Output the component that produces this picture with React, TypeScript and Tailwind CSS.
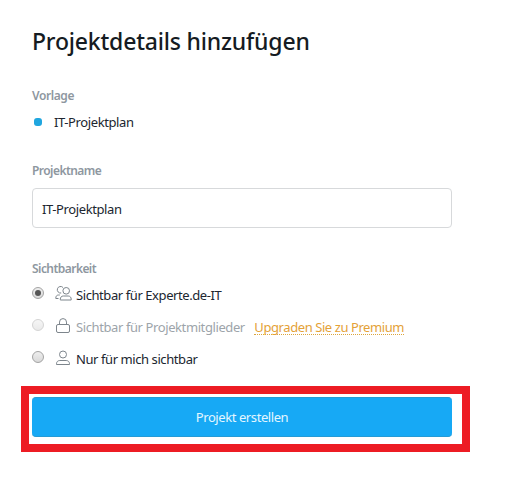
import type { ReactNode } from 'react';

function Label({ children, className }: { children: ReactNode; className: string }) {
  return <div className={`h-4 whitespace-nowrap text-xs font-semibold leading-4 text-[#8e979f] ${className}`}>{children}</div>;
}

function Radio({ checked, disabled }: { checked?: boolean; disabled?: boolean }) {
  return (
    <span
      className={`flex size-3 shrink-0 items-center justify-center rounded-full border bg-linear-to-b ${
        disabled ? 'border-[#d4d4d4] from-[#f6f6f6] to-[#eaeaea]' : 'border-[#a3a3a3] from-[#eeeeee] to-[#d9d9d9]'
      }`}
    >
      {checked && <span className="size-1.5 rounded-full bg-[#555555]" />}
    </span>
  );
}

function Icon({ children }: { children: ReactNode }) {
  return (
    <svg className="ml-[11px] h-[18px] w-[17px] shrink-0" viewBox="0 0 17 18" fill="none" stroke="#7d858c" strokeWidth="1">
      {children}
    </svg>
  );
}

export default function App() {
  return (
    <main className="h-[478px] w-[513px] overflow-hidden bg-white pt-[25px] font-['Noto_Sans','Open_Sans',sans-serif] text-[13px] text-[#202630]">
      <div className="ml-8 w-[420px]">
        <h1 className="h-8 whitespace-nowrap text-[23px] font-medium leading-8 tracking-[-0.19px] text-[#151b22]">Projektdetails hinzufügen</h1>
        <Label className="mt-[31px] tracking-[-0.4px]">Vorlage</Label>
        <div className="mt-[9px] flex h-[18px] items-center whitespace-nowrap tracking-[-0.4px]">
          <span className="ml-0.5 mr-3 size-2 rounded-[3px] bg-[#20a6df]" />
          <span className="pt-0.5">IT-Projektplan</span>
        </div>
        <Label className="mt-8 tracking-[-0.55px]">Projektname</Label>
        <div className="mt-[9px] flex h-10 items-center whitespace-nowrap rounded-[4px] border border-[#d7d9db] pl-[9px] pt-1 tracking-[-0.4px]">
          IT-Projektplan
        </div>
        <Label className="mt-[33px] tracking-[-0.55px]">Sichtbarkeit</Label>
        <div className="mt-[7px] flex flex-col gap-3.5 whitespace-nowrap">
          <div className="flex h-[18px] items-center">
            <Radio checked />
            <Icon>
              <circle cx="11.2" cy="6.8" r="3.3" />
              <path d="M5.3 16v-.8c0-1.9 1.2-3.2 3-3.2h4.9c1.8 0 3 1.3 3 3.2v.8z M8 3.5A3.3 3.3 0 1 0 6.2 9M4.8 11H3.6C1.8 11 .8 12.2.8 14v.5h2.7" />
            </Icon>
            <span className="ml-1 pt-[5px] tracking-[-0.42px]">Sichtbar für Experte.de-IT</span>
          </div>
          <div className="flex h-[18px] items-center text-[#9da4aa]">
            <Radio disabled />
            <Icon>
              <path d="M4.5 8.5V6.1a3.5 3.5 0 0 1 7 0v2.4" />
              <rect x="1.5" y="8.5" width="13" height="8" rx="1.5" />
            </Icon>
            <span className="ml-1 pt-[5px] tracking-[-0.4px]">Sichtbar für Projektmitglieder</span>
            <span className="ml-[9.5px] mt-1 h-4 border-b border-dotted border-[#dca53c] leading-4 tracking-[-0.42px] text-[#e4a137]">Upgraden Sie zu Premium</span>
          </div>
          <div className="flex h-[18px] items-center">
            <Radio />
            <Icon>
              <circle cx="8" cy="6.5" r="3.5" />
              <path d="M1.5 16.5v-.7c0-2 1.4-3.3 3.3-3.3h6.4c1.9 0 3.3 1.3 3.3 3.3v.7z" />
            </Icon>
            <span className="ml-1 pt-[5px] tracking-[-0.42px]">Nur für mich sichtbar</span>
          </div>
        </div>
      </div>
      <div className="ml-[21px] mt-5 h-[66px] w-[449px] border-8 border-[#ed1c24] pl-[3px] pt-[3px]">
        <button className="flex h-10 w-[420px] items-center justify-center rounded-[4px] border-y border-[#269bd5] bg-[#17a9f5] pt-0.5 text-[13px] tracking-[-0.42px] text-[#e3f6ff]">
          Projekt erstellen
        </button>
      </div>
    </main>
  );
}
